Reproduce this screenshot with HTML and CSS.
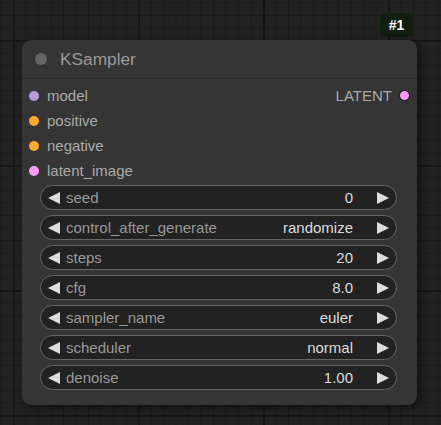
FILE: index.html
```html
<!DOCTYPE html>
<html>
<head>
<meta charset="utf-8">
<link rel="stylesheet" href="styles.css">
</head>
<body>
<div class="canvas">
  <div class="badge">#1</div>
  <div class="node">
    <div class="title"><span class="title-dot"></span><span class="title-text">KSampler</span></div>
    <div class="slots">
      <div class="slot-row">
        <div class="slot"><span class="dot model"></span>model</div>
        <div class="slot out">LATENT<span class="dot latent outline"></span></div>
      </div>
      <div class="slot-row"><div class="slot"><span class="dot cond"></span>positive</div></div>
      <div class="slot-row"><div class="slot"><span class="dot cond"></span>negative</div></div>
      <div class="slot-row"><div class="slot"><span class="dot latent"></span>latent_image</div></div>
    </div>
    <div class="widgets">
      <div class="widget"><svg class="arr" viewBox="0 0 12 12"><polygon points="0,6 12,0 12,12"/></svg><span class="label">seed</span><span class="value">0</span><svg class="arr" viewBox="0 0 12 12"><polygon points="12,6 0,0 0,12"/></svg></div>
      <div class="widget"><svg class="arr" viewBox="0 0 12 12"><polygon points="0,6 12,0 12,12"/></svg><span class="label">control_after_generate</span><span class="value">randomize</span><svg class="arr" viewBox="0 0 12 12"><polygon points="12,6 0,0 0,12"/></svg></div>
      <div class="widget"><svg class="arr" viewBox="0 0 12 12"><polygon points="0,6 12,0 12,12"/></svg><span class="label">steps</span><span class="value">20</span><svg class="arr" viewBox="0 0 12 12"><polygon points="12,6 0,0 0,12"/></svg></div>
      <div class="widget"><svg class="arr" viewBox="0 0 12 12"><polygon points="0,6 12,0 12,12"/></svg><span class="label">cfg</span><span class="value">8.0</span><svg class="arr" viewBox="0 0 12 12"><polygon points="12,6 0,0 0,12"/></svg></div>
      <div class="widget"><svg class="arr" viewBox="0 0 12 12"><polygon points="0,6 12,0 12,12"/></svg><span class="label">sampler_name</span><span class="value">euler</span><svg class="arr" viewBox="0 0 12 12"><polygon points="12,6 0,0 0,12"/></svg></div>
      <div class="widget"><svg class="arr" viewBox="0 0 12 12"><polygon points="0,6 12,0 12,12"/></svg><span class="label">scheduler</span><span class="value">normal</span><svg class="arr" viewBox="0 0 12 12"><polygon points="12,6 0,0 0,12"/></svg></div>
      <div class="widget"><svg class="arr" viewBox="0 0 12 12"><polygon points="0,6 12,0 12,12"/></svg><span class="label">denoise</span><span class="value">1.00</span><svg class="arr" viewBox="0 0 12 12"><polygon points="12,6 0,0 0,12"/></svg></div>
    </div>
  </div>
</div>
</body>
</html>
```
FILE: styles.css
```css
html, body {
  margin: 0;
  padding: 0;
}
body {
  width: 441px;
  height: 425px;
  overflow: hidden;
  font-family: "Liberation Sans", Arial, sans-serif;
}
.canvas {
  position: relative;
  width: 441px;
  height: 425px;
  background-color: #222222;
  background-image:
    linear-gradient(to right, #161616 2px, transparent 2px),
    linear-gradient(to bottom, #161616 2px, transparent 2px),
    linear-gradient(to right, #1b1b1b 1px, transparent 1px),
    linear-gradient(to bottom, #1b1b1b 1px, transparent 1px);
  background-size: 125px 125px, 125px 125px, 12.5px 12.5px, 12.5px 12.5px;
  background-position: 13px 40px, 13px 40px, 13px 40px, 13px 40px;
}
.badge {
  position: absolute;
  left: 380px;
  top: 13px;
  width: 33px;
  height: 24px;
  border-radius: 5px;
  background: #0f1e0f;
  color: #ffffff;
  font-weight: bold;
  font-size: 14px;
  display: flex;
  align-items: center;
  justify-content: center;
}
.node {
  position: absolute;
  left: 22px;
  top: 40px;
  width: 395px;
  height: 365px;
  background: #353535;
  border-radius: 9px;
  box-shadow: 3px 3px 8px rgba(0, 0, 0, 0.55);
  display: flex;
  flex-direction: column;
}
.title {
  height: 38px;
  border-bottom: 1px solid #2c2c2c;
  display: flex;
  align-items: center;
  padding-left: 13px;
  gap: 13px;
}
.title-dot {
  width: 12px;
  height: 12px;
  border-radius: 50%;
  background: #666666;
}
.title-text {
  color: #999999;
  font-size: 17.3px;
}
.slots {
  padding-top: 4px;
  display: flex;
  flex-direction: column;
}
.slot-row {
  height: 25px;
  display: flex;
  align-items: center;
  justify-content: space-between;
  padding: 0 7px;
}
.slot {
  display: flex;
  align-items: center;
  gap: 8px;
  color: #aaaaaa;
  font-size: 15px;
}
.slot.out {
  gap: 7px;
}
.dot {
  width: 10px;
  height: 10px;
  border-radius: 50%;
  box-sizing: border-box;
}
.dot.model { background: #b39ddb; }
.dot.cond { background: #ffa931; }
.dot.latent { background: #ff9cf9; }
.dot.outline {
  width: 11px;
  height: 11px;
  border: 1.5px solid #111111;
}
.widgets {
  padding: 2px 20px 0 18px;
  display: flex;
  flex-direction: column;
  gap: 5px;
}
.widget {
  height: 25px;
  box-sizing: border-box;
  border: 1px solid #666666;
  border-radius: 13px;
  background: #222222;
  display: flex;
  align-items: center;
  padding: 0 7px;
  font-size: 15px;
}
.arr {
  width: 12px;
  height: 12px;
  fill: #dddddd;
  flex: none;
}
.label {
  color: #999999;
  margin-left: 6px;
  flex: 1;
}
.value {
  color: #dddddd;
  margin-right: 24px;
}
```
